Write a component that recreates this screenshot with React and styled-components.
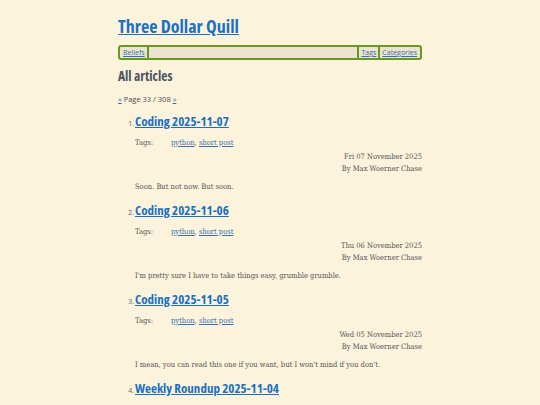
import React from "react";
import styled, { createGlobalStyle } from "styled-components";

const GlobalStyle = createGlobalStyle`
  html, body {
    margin: 0;
    padding: 0;
    background: #fbf3dc;
  }
  body {
    font-family: "DejaVu Serif Condensed", "DejaVu Serif", "Liberation Serif", serif;
    font-stretch: condensed;
    color: #4d4d4d;
  }
`;

const headFont = `"Open Sans", "Noto Sans", sans-serif`;

const Page = styled.div`
  width: 304px;
  margin: 0 auto;
  padding-top: 15px;
  height: 405px;
  overflow: hidden;
  box-sizing: border-box;
`;

const SiteTitle = styled.a`
  display: block;
  font-family: ${headFont};
  font-stretch: condensed;
  font-weight: 700;
  font-size: 18px;
  line-height: 22px;
  color: #1a70c4;
  text-decoration: underline;
`;

const Nav = styled.nav`
  display: flex;
  align-items: stretch;
  margin-top: 8px;
  height: 11px;
  border: 2px solid #69991c;
  border-radius: 3px;
  background: #ebe4cf;
  font-family: ${headFont};
  font-stretch: normal;
  font-size: 7px;
  line-height: 11px;
  padding: 0 1px;
`;

const NavLink = styled.a`
  color: #3a6fb0;
  text-decoration: underline;
  padding: 0 2px;
  border-left: ${props => (props.sep ? "2px solid #69991c" : "none")};
  border-right: ${props => (props.sepRight ? "2px solid #69991c" : "none")};
`;

const NavFill = styled.div`
  flex: 1;
`;

const Heading = styled.h1`
  font-family: ${headFont};
  font-stretch: condensed;
  font-weight: 700;
  font-size: 13.5px;
  line-height: 16px;
  color: #4a555c;
  margin: 8px 0 0;
`;

const Pager = styled.div`
  font-family: ${headFont};
  font-stretch: normal;
  font-size: 7.5px;
  line-height: 10px;
  margin-top: 10px;
  color: #4d4d4d;
`;

const PagerLink = styled.a`
  color: #3a6fb0;
  text-decoration: underline;
`;

const ArticleList = styled.ol`
  margin: 9px 0 0;
  padding-left: 17px;
  list-style: none;
  counter-reset: item;
`;

const Article = styled.li`
  counter-increment: item;
  margin-bottom: 10px;
`;

const ArticleTitle = styled.h2`
  display: flex;
  align-items: baseline;
  margin: 0;
  &::before {
    content: counter(item) ".";
    width: 10px;
    margin-left: -10px;
    padding-right: 1px;
    box-sizing: border-box;
    text-align: right;
    font-family: ${headFont};
    font-stretch: normal;
    font-weight: 400;
    font-size: 7px;
    color: #666;
  }
`;

const TitleLink = styled.a`
  font-family: ${headFont};
  font-stretch: condensed;
  font-weight: 700;
  font-size: 13px;
  line-height: 16px;
  color: #1a70c4;
  text-decoration: underline;
`;

const TagRow = styled.div`
  display: flex;
  font-size: 7.5px;
  line-height: 10px;
  margin-top: 9px;
`;

const TagLabel = styled.span`
  width: 36px;
  color: #555;
`;

const TagLink = styled.a`
  color: #3a6fb0;
  text-decoration: underline;
`;

const Meta = styled.div`
  text-align: right;
  font-size: 7.5px;
  line-height: 12px;
  margin-top: 3px;
  color: #555;
`;

const Summary = styled.p`
  font-size: 7.5px;
  line-height: 10px;
  margin: 7px 0 0;
  color: #555;
`;

const articles = [
  {
    title: "Coding 2025-11-07",
    date: "Fri 07 November 2025",
    summary: "Soon. But not now. But soon.",
  },
  {
    title: "Coding 2025-11-06",
    date: "Thu 06 November 2025",
    summary: "I'm pretty sure I have to take things easy, grumble grumble.",
  },
  {
    title: "Coding 2025-11-05",
    date: "Wed 05 November 2025",
    summary: "I mean, you can read this one if you want, but I won't mind if you don't.",
  },
  {
    title: "Weekly Roundup 2025-11-04",
    date: "Tue 04 November 2025",
    summary: "",
  },
];

export default function App() {
  return (
    <>
      <GlobalStyle />
      <Page>
        <SiteTitle href="#">Three Dollar Quill</SiteTitle>
        <Nav>
          <NavLink href="#" sepRight>Beliefs</NavLink>
          <NavFill />
          <NavLink href="#" sep>Tags</NavLink>
          <NavLink href="#" sep>Categories</NavLink>
        </Nav>
        <Heading>All articles</Heading>
        <Pager>
          <PagerLink href="#">«</PagerLink> Page 33 / 308{" "}
          <PagerLink href="#">»</PagerLink>
        </Pager>
        <ArticleList>
          {articles.map(a => (
            <Article key={a.title}>
              <ArticleTitle>
                <TitleLink href="#">{a.title}</TitleLink>
              </ArticleTitle>
              <TagRow>
                <TagLabel>Tags:</TagLabel>
                <span>
                  <TagLink href="#">python</TagLink>,{" "}
                  <TagLink href="#">short post</TagLink>
                </span>
              </TagRow>
              <Meta>
                {a.date}
                <br />
                By Max Woerner Chase
              </Meta>
              {a.summary && <Summary>{a.summary}</Summary>}
            </Article>
          ))}
        </ArticleList>
      </Page>
    </>
  );
}
